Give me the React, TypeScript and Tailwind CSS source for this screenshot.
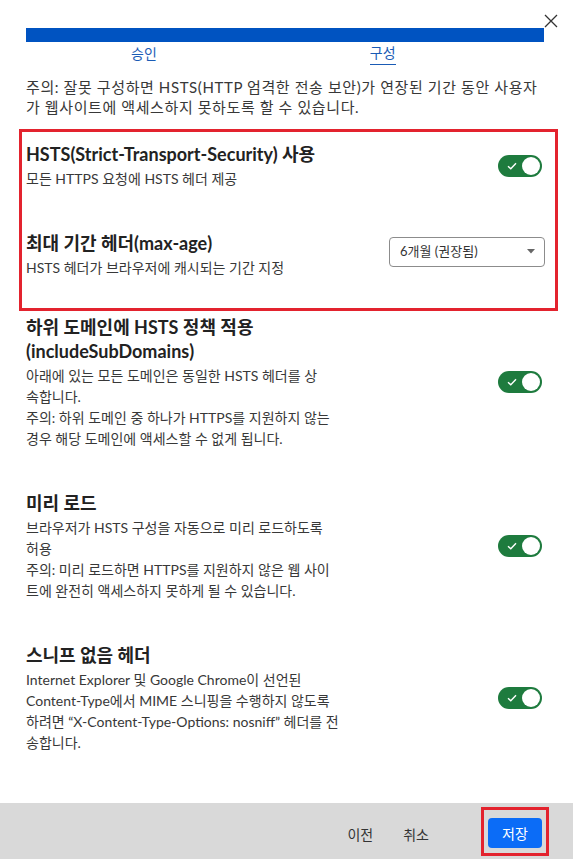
import React from "react";

const font = { fontFamily: 'Lato, "Noto Sans CJK KR", sans-serif' };

function Toggle() {
  return (
    <div className="relative flex h-[22px] w-[44px] shrink-0 items-center rounded-full bg-[#1e7b3e]">
      <svg className="ml-[9px]" width="10" height="8" viewBox="0 0 10 8">
        <path d="M1 4.2 L3.8 6.8 L9 1.2" fill="none" stroke="white" strokeWidth="1.4" />
      </svg>
      <span className="absolute right-[2px] top-[2px] h-[18px] w-[18px] rounded-full bg-white" />
    </div>
  );
}

function Title(props: { children: React.ReactNode }) {
  return (
    <p className="mb-[2px] text-[18px] font-bold leading-[24px] text-[#222]">{props.children}</p>
  );
}

function Desc(props: { children: React.ReactNode }) {
  return <p className="whitespace-nowrap text-[14px] leading-[21px] text-[#383838]">{props.children}</p>;
}

function ToggleSection(props: { title: React.ReactNode; children: React.ReactNode; className?: string }) {
  return (
    <div className={"flex items-center justify-between pl-[26px] pr-[31px] " + (props.className ?? "")}>
      <div className="w-[360px]">
        <Title>{props.title}</Title>
        {props.children}
      </div>
      <Toggle />
    </div>
  );
}

export default function App() {
  return (
    <div style={font} className="relative flex h-[859px] w-[573px] flex-col bg-white">
      <button className="absolute right-[15px] top-[14px]">
        <svg width="14" height="14" viewBox="0 0 14 14">
          <path d="M1 1 L13 13 M13 1 L1 13" stroke="#333" strokeWidth="1.3" />
        </svg>
      </button>

      <div className="flex-1">
        <div className="ml-[26px] mt-[28px] h-[14px] w-[518px] bg-[#0053c1]" />
        <div className="flex text-[14px] leading-[22px] text-[#1a5bb5]">
          <span className="ml-[131px] mt-[1px]">승인</span>
          <span className="ml-[213px] mt-[1px] border-b border-[#1a5bb5] leading-[20px]">구성</span>
        </div>

        <p className="mt-[12px] whitespace-nowrap px-[26px] text-[15px] leading-[20px] tracking-[0.6px] text-[#383838]">
          주의: 잘못 구성하면 HSTS(HTTP 엄격한 전송 보안)가 연장된 기간 동안 사용자
          <br />가 웹사이트에 액세스하지 못하도록 할 수 있습니다.
        </p>

        <div className="ml-[19px] mt-[12px] w-[539px] border-[3px] border-[#e3232e] pb-[30px] pl-[4px] pr-[10px] pt-[10px]">
          <div className="flex items-center justify-between pr-[3px]">
            <div>
              <Title>HSTS(Strict-Transport-Security) 사용</Title>
              <Desc>모든 HTTPS 요청에 HSTS 헤더 제공</Desc>
            </div>
            <Toggle />
          </div>
          <div className="mt-[42px] flex items-center justify-between">
            <div>
              <Title>최대 기간 헤더(max-age)</Title>
              <Desc>HSTS 헤더가 브라우저에 캐시되는 기간 지정</Desc>
            </div>
            <div className="mb-[6px] flex h-[30px] w-[156px] items-center justify-between rounded-[4px] border border-[#8c8c8c] pl-[10px] pr-[9px] text-[13px] text-[#333]">
              <span>6개월 (권장됨)</span>
              <svg width="8" height="5" viewBox="0 0 8 5">
                <path d="M0 0 H8 L4 4.5 Z" fill="#666" />
              </svg>
            </div>
          </div>
        </div>

        <ToggleSection
          className="mt-[4px]"
          title={
            <>
              하위 도메인에 HSTS 정책 적용
              <br />
              (includeSubDomains)
            </>
          }
        >
          <Desc>
            아래에 있는 모든 도메인은 동일한 HSTS 헤더를 상<br />
            속합니다.
            <br />
            주의: 하위 도메인 중 하나가 HTTPS를 지원하지 않는
            <br />
            경우 해당 도메인에 액세스할 수 없게 됩니다.
          </Desc>
        </ToggleSection>

        <ToggleSection className="mt-[42px]" title="미리 로드">
          <Desc>
            브라우저가 HSTS 구성을 자동으로 미리 로드하도록
            <br />
            허용
            <br />
            주의: 미리 로드하면 HTTPS를 지원하지 않은 웹 사이
            <br />
            트에 완전히 액세스하지 못하게 될 수 있습니다.
          </Desc>
        </ToggleSection>

        <ToggleSection className="mt-[42px]" title="스니프 없음 헤더">
          <Desc>
            Internet Explorer 및 Google Chrome이 선언된
            <br />
            Content-Type에서 MIME 스니핑을 수행하지 않도록
            <br />
            하려면 “X-Content-Type-Options: nosniff” 헤더를 전
            <br />
            송합니다.
          </Desc>
        </ToggleSection>
      </div>

      <div className="flex h-[56px] items-start justify-end bg-[#d9d9d9] pr-[24px] pt-[4px]">
        <span className="mr-[30px] mt-[18px] text-[14px] leading-[20px] text-[#333]">이전</span>
        <span className="mr-[52px] mt-[18px] text-[14px] leading-[20px] text-[#333]">취소</span>
        <div className="border-[3px] border-[#e3232e] px-[4px] pb-[5px] pt-[8px]">
          <button className="h-[30px] w-[54px] rounded-[4px] bg-[#0b6cf7] text-[14px] text-white">저장</button>
        </div>
      </div>
    </div>
  );
}
